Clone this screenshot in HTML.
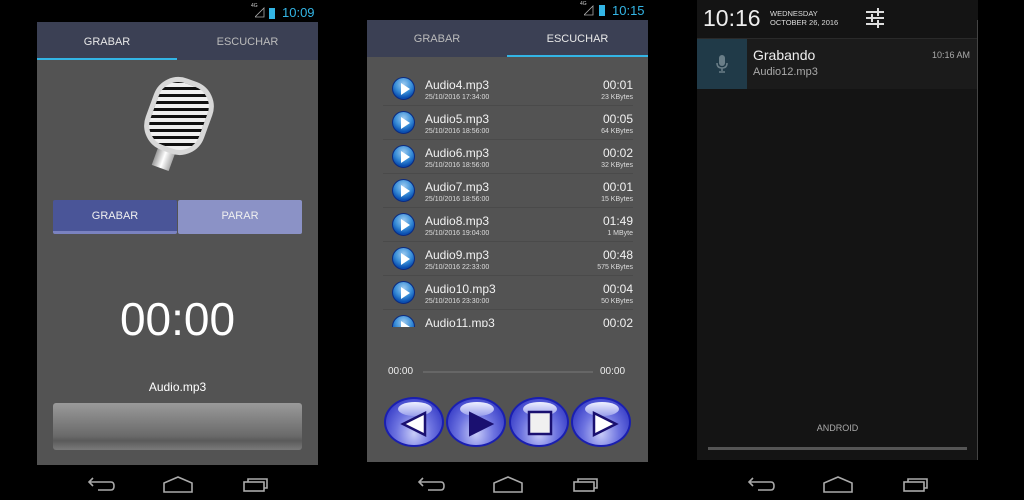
<!DOCTYPE html>
<html><head><meta charset="utf-8"><style>
*{margin:0;padding:0;box-sizing:border-box}
body{width:1024px;height:500px;background:#000;position:relative;overflow:hidden;font-family:"Liberation Sans",sans-serif;color:#fff}
.a{position:absolute}
.tab{position:absolute;font-size:11px;text-align:center}
.row{position:absolute;left:383px;width:250px;height:34px;border-bottom:1px solid #4a4a4a}
.row .n{position:absolute;left:42px;top:6px;font-size:12px;color:#f2f2f2}
.row .d{position:absolute;left:42px;top:22px;font-size:7px;color:#ddd}
.row .t{position:absolute;right:0;top:6px;font-size:12px;color:#f2f2f2}
.row .k{position:absolute;right:0;top:22px;font-size:7px;color:#ddd}
.row .p{position:absolute;left:9px;top:5px;width:23px;height:23px;border-radius:50%;background:radial-gradient(circle at 50% 30%,#9ccaf0 0%,#3a8fd8 45%,#0a4fb0 75%);border:1px solid #0a2a80}
.row .p:after{content:"";position:absolute;left:8px;top:5px;border-left:9px solid #fff;border-top:6px solid transparent;border-bottom:6px solid transparent}
.bb{position:absolute;top:397px;width:60px;height:50px;border-radius:50%;border:2px solid #1a1fb0;background:radial-gradient(ellipse at 50% 75%,#c8ccf8 0%,#6d73e0 45%,#3a40c8 80%)}
.bb:before{content:"";position:absolute;left:12px;top:3px;width:34px;height:14px;border-radius:50%;background:linear-gradient(#eef0ff,#9aa0ec)}
</style></head><body>
<!-- Panel 1 -->
<div class="a" style="left:37px;top:22px;width:281px;height:38px;background:#3b4054"></div>
<div class="a" style="left:37px;top:58px;width:140px;height:2px;background:#33b5e5"></div>
<div class="tab" style="left:37px;top:36px;width:140px;color:#e8e8e8">GRABAR</div>
<div class="tab" style="left:177px;top:36px;width:141px;color:#bbb">ESCUCHAR</div>
<div class="a" style="left:37px;top:60px;width:281px;height:405px;background:#535353"></div>
<div class="a" style="left:282px;top:5px;font-size:13px;color:#33b5e5">10:09</div>
<div class="a" style="left:251px;top:3px;font-size:5px;color:#ccc">4G</div>
<svg class="a" style="left:255px;top:7px" width="10" height="11"><path d="M0 10 L9 1 V10 Z" fill="none" stroke="#aaa" stroke-width="0.8"/></svg>
<div class="a" style="left:269px;top:8px;width:6px;height:11px;background:#33b5e5"></div>
<!-- mic -->
<div class="a" style="left:157px;top:135px;width:18px;height:34px;background:linear-gradient(90deg,#999,#fff,#aaa);transform:rotate(20deg)"></div>
<div class="a" style="left:148px;top:78px;width:62px;height:76px;border-radius:26px;background:repeating-linear-gradient(160deg,#f0f0f0 0 4px,#111 4px 7px);border:5px solid #d8d8d8;transform:rotate(20deg)"></div>
<div class="a" style="left:53px;top:200px;width:124px;height:34px;background:#4a5598;border-radius:2px;border-bottom:3px solid #7a82c0"></div>
<div class="a" style="left:178px;top:200px;width:124px;height:34px;background:#8b92c6;border-radius:2px"></div>
<div class="tab" style="left:53px;top:210px;width:124px;color:#f0f0f0">GRABAR</div>
<div class="tab" style="left:178px;top:210px;width:124px;color:#f0f0f0">PARAR</div>
<div class="a" style="left:37px;top:292px;width:281px;text-align:center;font-size:46px;color:#fff">00:00</div>
<div class="a" style="left:37px;top:380px;width:281px;text-align:center;font-size:12px;color:#fff">Audio.mp3</div>
<div class="a" style="left:53px;top:403px;width:249px;height:47px;border-radius:3px;background:linear-gradient(#9a9a9a,#6a6a6a 70%,#5a5a5a 80%,#7a7a7a)"></div>

<!-- Panel 2 -->
<div class="a" style="left:367px;top:20px;width:281px;height:37px;background:#3b4054"></div>
<div class="a" style="left:507px;top:55px;width:141px;height:2px;background:#33b5e5"></div>
<div class="tab" style="left:367px;top:33px;width:140px;color:#bbb">GRABAR</div>
<div class="tab" style="left:507px;top:33px;width:141px;color:#e8e8e8">ESCUCHAR</div>
<div class="a" style="left:367px;top:57px;width:281px;height:405px;background:#535353"></div>
<div class="a" style="left:612px;top:3px;font-size:13px;color:#33b5e5">10:15</div>
<div class="a" style="left:580px;top:1px;font-size:5px;color:#ccc">4G</div>
<svg class="a" style="left:584px;top:5px" width="10" height="11"><path d="M0 10 L9 1 V10 Z" fill="none" stroke="#aaa" stroke-width="0.8"/></svg>
<div class="a" style="left:599px;top:5px;width:6px;height:11px;background:#33b5e5"></div>
<div class="a" style="left:367px;top:72px;width:281px;height:255px;overflow:hidden">
<div style="position:relative;left:-367px;top:-72px">
<div class="row" style="top:72px"><div class="p"></div><div class="n">Audio4.mp3</div><div class="d">25/10/2016 17:34:00</div><div class="t">00:01</div><div class="k">23 KBytes</div></div>
<div class="row" style="top:106px"><div class="p"></div><div class="n">Audio5.mp3</div><div class="d">25/10/2016 18:56:00</div><div class="t">00:05</div><div class="k">64 KBytes</div></div>
<div class="row" style="top:140px"><div class="p"></div><div class="n">Audio6.mp3</div><div class="d">25/10/2016 18:56:00</div><div class="t">00:02</div><div class="k">32 KBytes</div></div>
<div class="row" style="top:174px"><div class="p"></div><div class="n">Audio7.mp3</div><div class="d">25/10/2016 18:56:00</div><div class="t">00:01</div><div class="k">15 KBytes</div></div>
<div class="row" style="top:208px"><div class="p"></div><div class="n">Audio8.mp3</div><div class="d">25/10/2016 19:04:00</div><div class="t">01:49</div><div class="k">1 MByte</div></div>
<div class="row" style="top:242px"><div class="p"></div><div class="n">Audio9.mp3</div><div class="d">25/10/2016 22:33:00</div><div class="t">00:48</div><div class="k">575 KBytes</div></div>
<div class="row" style="top:276px"><div class="p"></div><div class="n">Audio10.mp3</div><div class="d">25/10/2016 23:30:00</div><div class="t">00:04</div><div class="k">50 KBytes</div></div>
<div class="row" style="top:310px"><div class="p"></div><div class="n">Audio11.mp3</div><div class="d">25/10/2016 23:30:00</div><div class="t">00:02</div><div class="k"></div></div>
</div></div>
<div class="a" style="left:388px;top:366px;font-size:10px;color:#eee">00:00</div>
<div class="a" style="left:600px;top:366px;font-size:10px;color:#eee">00:00</div>
<div class="a" style="left:423px;top:371px;width:170px;height:2px;background:#666"></div>
<div class="bb" style="left:384px"><svg class="a" style="left:10px;top:8px" width="40" height="34"><polygon points="29,6 29,28 7,17" fill="#fff" stroke="#1a1070" stroke-width="2.5"/></svg></div>
<div class="bb" style="left:446px"><svg class="a" style="left:10px;top:8px" width="40" height="34"><polygon points="12,6 12,28 34,17" fill="#1a1070" stroke="#1a1070" stroke-width="2"/></svg></div>
<div class="bb" style="left:509px"><svg class="a" style="left:10px;top:8px" width="40" height="34"><rect x="8" y="5" width="22" height="22" fill="#f0f0f0" stroke="#1a1070" stroke-width="2.5"/></svg></div>
<div class="bb" style="left:571px"><svg class="a" style="left:10px;top:8px" width="40" height="34"><polygon points="11,6 11,28 33,17" fill="#fff" stroke="#1a1070" stroke-width="2.5"/></svg></div>

<!-- Panel 3 -->
<div class="a" style="left:697px;top:0;width:281px;height:460px;background:#141414"></div>
<div class="a" style="left:977px;top:20px;width:1px;height:440px;background:#444"></div>
<div class="a" style="left:703px;top:5px;font-size:23px;color:#eee">10:16</div>
<div class="a" style="left:770px;top:9px;font-size:7.5px;color:#ddd;line-height:9px">WEDNESDAY<br>OCTOBER 26, 2016</div>
<svg class="a" style="left:864px;top:7px" width="22" height="22"><g stroke="#ddd" stroke-width="2"><line x1="2" y1="5" x2="20" y2="5"/><line x1="2" y1="11" x2="20" y2="11"/><line x1="2" y1="17" x2="20" y2="17"/><line x1="14" y1="1" x2="14" y2="9"/><line x1="8" y1="7" x2="8" y2="15"/><line x1="14" y1="13" x2="14" y2="21"/></g></svg>
<div class="a" style="left:697px;top:38px;width:280px;height:1px;background:#2a2a2a"></div>
<div class="a" style="left:697px;top:39px;width:280px;height:50px;background:#1b1b1b"></div>
<div class="a" style="left:697px;top:39px;width:50px;height:50px;background:#203a48"></div>
<svg class="a" style="left:714px;top:54px" width="16" height="20"><rect x="5" y="1" width="6" height="11" rx="3" fill="#6a7e88"/><path d="M3 9 Q3 14 8 14 Q13 14 13 9 M8 14 V17 M5 18 H11" stroke="#6a7e88" stroke-width="1.5" fill="none"/></svg>
<div class="a" style="left:753px;top:47px;font-size:14px;color:#eee">Grabando</div>
<div class="a" style="left:753px;top:66px;font-size:11px;color:#aaa">Audio12.mp3</div>
<div class="a" style="left:932px;top:50px;font-size:9px;color:#aaa">10:16 AM</div>
<div class="a" style="left:697px;top:423px;width:281px;text-align:center;font-size:9px;color:#aaa">ANDROID</div>
<div class="a" style="left:708px;top:447px;width:259px;height:3px;background:#555"></div>

<!-- nav bars -->
<svg class="a" style="left:0;top:470px" width="1024" height="30">
<defs><g id="nv" stroke="#aaa" stroke-width="1.6" fill="none">
<path d="M52 12 H74 Q77 12 77 16 Q77 20 74 20 H61"/><path d="M56 8 L52 12 L56 16"/>
<path d="M127 22 V13 L141 7 L155 13 V22 Z"/>
<rect x="207" y="12" width="20" height="9"/><path d="M211 12 V9 H230 V18 H227"/>
</g></defs>
<use href="#nv" x="37" y="0"/><use href="#nv" x="367" y="0"/><use href="#nv" x="697" y="0"/>
</svg>
</body></html>
